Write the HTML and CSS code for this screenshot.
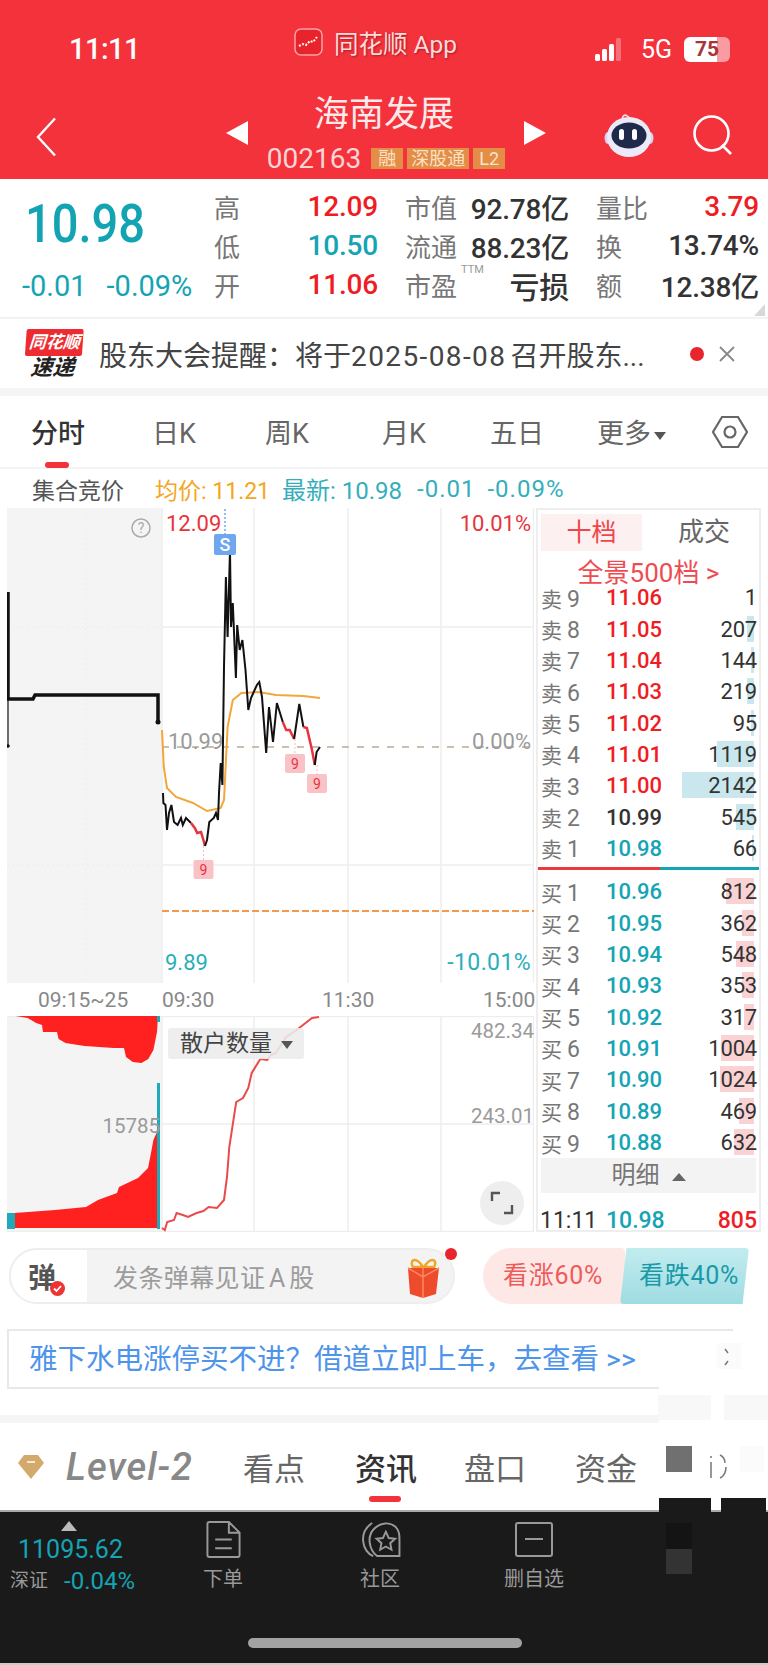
FILE: index.html
```html
<!DOCTYPE html>
<html lang="zh-CN">
<head>
    <meta charset="UTF-8">
    <meta name="viewport" content="width=device-width, initial-scale=1.0">
    <title>海南发展 002163</title>
    <link rel="stylesheet" href="styles.css">
</head>
<body>
<div class="page">

    <!-- Red header -->
    <header class="topbar">
        <div class="status">
            <span class="clock">11:11</span>
            <div class="app-name">
                <svg class="app-logo" width="29" height="28" viewBox="0 0 29 28">
                    <rect x="1" y="1" width="27" height="26" rx="6" fill="#e8232c" stroke="#f9a3a6" stroke-width="1.5"/>
                    <path d="M5 18l4-2 3 1 4-4 3 1 4-5" fill="none" stroke="#fff" stroke-width="2" stroke-dasharray="2 1.5"/>
                </svg>
                <span>同花顺 App</span>
            </div>
            <div class="status-right">
                <svg width="27" height="23" viewBox="0 0 27 23">
                    <rect x="0" y="16" width="5" height="7" rx="1.5" fill="#fff"/>
                    <rect x="7" y="11" width="5" height="12" rx="1.5" fill="#fff"/>
                    <rect x="14" y="6" width="5" height="17" rx="1.5" fill="#fff"/>
                    <rect x="21" y="0" width="5" height="23" rx="1.5" fill="#fff" opacity=".3"/>
                </svg>
                <span class="net">5G</span>
                <div class="battery"><span>75</span></div>
            </div>
        </div>
        <div class="nav">
            <svg class="nav-back" width="21" height="40" viewBox="0 0 21 40">
                <path d="M19 1.5L2 20l17 18.5" fill="none" stroke="#fff" stroke-width="2.4"/>
            </svg>
            <div class="nav-center">
                <svg width="22" height="24" viewBox="0 0 22 24"><path d="M22 0v24L0 12z" fill="#fff"/></svg>
                <div class="stock-title">
                    <div class="stock-name">海南发展</div>
                    <div class="stock-code">
                        <span>002163</span>
                        <i class="tag">融</i><i class="tag">深股通</i><i class="tag">L2</i>
                    </div>
                </div>
                <svg width="22" height="24" viewBox="0 0 22 24"><path d="M0 0v24l22-12z" fill="#fff"/></svg>
            </div>
            <svg class="robot" width="50" height="44" viewBox="0 0 50 44">
                <path d="M19 8c-2-5 2-7 4-5l4 3" fill="none" stroke="#f4d9e4" stroke-width="1.6"/>
                <ellipse cx="4" cy="25" rx="3.5" ry="6" fill="#d9d4ee"/>
                <ellipse cx="46" cy="25" rx="3.5" ry="6" fill="#d9d4ee"/>
                <ellipse cx="25" cy="24" rx="22" ry="20" fill="#eceaf8"/>
                <ellipse cx="25" cy="22.500" rx="17.500" ry="13" fill="#1f2a4a"/>
                <rect x="15" y="16" width="5" height="11" rx="2.500" fill="#fff"/>
                <rect x="28" y="16" width="5" height="11" rx="2.500" fill="#fff"/>
            </svg>
            <svg class="search" width="40" height="40" viewBox="0 0 40 40">
                <circle cx="18.500" cy="18.500" r="17" fill="none" stroke="#fff" stroke-width="2.600"/>
                <path d="M29 30l9 9" stroke="#fff" stroke-width="2.600"/>
            </svg>
        </div>
    </header>

    <!-- Quote summary -->
    <section class="quote">
        <div class="quote-price">
            <div class="price-big">10.98</div>
            <div class="price-change"><span>-0.01</span><span>-0.09%</span></div>
        </div>
        <div class="stat-col first">
            <div class="stat"><label>高</label><b class="up">12.09</b></div>
            <div class="stat"><label>低</label><b class="down">10.50</b></div>
            <div class="stat"><label>开</label><b class="up">11.06</b></div>
        </div>
        <div class="stat-col">
            <div class="stat"><label>市值</label><b>92.78亿</b></div>
            <div class="stat"><label>流通</label><b>88.23亿</b></div>
            <div class="stat"><label class="ttm">市盈<sup>TTM</sup></label><b class="loss">亏损</b></div>
        </div>
        <div class="stat-col last">
            <div class="stat"><label>量比</label><b class="up">3.79</b></div>
            <div class="stat"><label>换</label><b>13.74%</b></div>
            <div class="stat"><label>额</label><b>12.38亿</b></div>
        </div>
        <svg class="corner" width="11" height="12" viewBox="0 0 11 12"><path d="M11 0v12H0z" fill="#d8d8d8"/></svg>
    </section>

    <!-- News notice -->
    <section class="notice">
        <div class="notice-logo">
            <div class="logo-top">同花顺</div>
            <div class="logo-bottom">速递</div>
        </div>
        <div class="notice-text">股东大会提醒&#xFF1A;将于<span class="notice-date">2025-08-08</span>召开股东...</div>
        <span class="notice-dot"></span>
        <svg width="16" height="16" viewBox="0 0 16 16"><path d="M1 1l14 14M15 1L1 15" stroke="#888" stroke-width="1.800"/></svg>
    </section>

    <!-- Chart period tabs -->
    <nav class="period-tabs">
        <span class="active">分时</span>
        <span>日K</span>
        <span>周K</span>
        <span>月K</span>
        <span>五日</span>
        <span>更多<em class="caret"></em></span>
        <svg width="36" height="36" viewBox="0 0 36 36">
            <path d="M10 3h16l9 15-9 15H10L1 18z" fill="none" stroke="#666" stroke-width="2.200"/>
            <circle cx="18" cy="18" r="5.500" fill="none" stroke="#666" stroke-width="2.200"/>
        </svg>
    </nav>

    <div class="chart-head">
        <span class="auction">集合竞价</span>
        <span class="avg">均价: 11.21</span>
        <span class="latest">最新: 10.98</span>
        <span class="latest pct">-0.01</span>
        <span class="latest pct">-0.09%</span>
    </div>

    <section class="market">
        <div class="charts">
            <svg class="main-chart" width="527" height="475" viewBox="7 508 527 475">
                <rect x="7" y="508" width="155" height="475" fill="#f4f4f4"/>
                <g class="grid">
                    <path d="M162 508V983M254 508V983M348 508V983M441 508V983M533.500 508V983M162 627H534M162 865H534"/>
                </g>
                <path d="M7 627H162M7 865H162M86 508V983" stroke="#ececec" stroke-dasharray="2 3"/>

                <!-- pre-market -->
                <path d="M8 592V699H33L35 695H158V722" fill="none" stroke="#111" stroke-width="3.500"/>
                <path d="M8 699V746" stroke="#111" stroke-width="1.200"/>
                <circle cx="158" cy="722" r="2.500" fill="#111"/>
                <circle cx="8" cy="746" r="1.800" fill="#111"/>

                <path d="M162 747H534" stroke="#cdbfae" stroke-width="2" stroke-dasharray="7 8"/>
                <path d="M162 911H534" stroke="#f49a4c" stroke-width="2.200" stroke-dasharray="7 3"/>

                <text class="t-gray" x="168" y="749">10.99</text>
                <text class="t-gray" x="531" y="749" text-anchor="end">0.00%</text>

                <!-- average -->
                <polyline class="avg-line" points="162,730 163.800,767 167,788 176,797 193,803 207,811 220.700,808 224,800 227.600,727 232.800,700 241.400,693 258.600,692 275.900,695 303.400,696 320,698"/>

                <!-- price -->
                <polyline class="price-line" points="163,793 163.400,803 165.500,805 167,830 169,813 171.400,805 174,822 177.600,825 181,818 182.800,825 186,818 191,823"/>
                <polyline class="price-line red" points="191,823 194.800,828 197.200,833 201,832 203.400,840 205,846"/>
                <polyline class="price-line" points="205,846 207,840 209.300,822 213.800,818 216,813 218,820 219,793 220.700,763 222.400,785 224,667 225.900,577 227.600,637 230,550 231,627 232.800,603 235.900,678 237.200,625 239.700,650 242.400,640 245.500,670 248.300,710 251,698 256.900,685 259.300,682 262,697 266.200,753 269,707 273,742 276.900,703 282.800,722"/>
                <polyline class="price-line red" points="282.800,722 286.200,730 289.700,730 294.100,739"/>
                <polyline class="price-line" points="294.100,739 299.300,704 303.400,727"/>
                <polyline class="price-line red" points="303.400,727 306.900,728 312,750 314.800,765"/>
                <polyline class="price-line" points="314.800,765 316.600,752 320,747"/>

                <!-- markers -->
                <path d="M225 509V534" stroke="#6fa8f0" stroke-width="1.500" stroke-dasharray="2 2"/>
                <rect x="214" y="534" width="22" height="21" rx="2" fill="#6ea6ef"/>
                <text class="t-mark white" x="225" y="551" text-anchor="middle">S</text>
                <path d="M203.500 846V860M295 739V754M317 765V774" stroke="#f7b9bf" stroke-dasharray="2 2"/>
                <rect x="193.500" y="860" width="20" height="19" rx="2" fill="#f9c2c7"/>
                <rect x="285" y="754" width="20" height="19" rx="2" fill="#f9c2c7"/>
                <rect x="307" y="774" width="20" height="19" rx="2" fill="#f9c2c7"/>
                <text class="t-nine" x="203.500" y="875" text-anchor="middle">9</text>
                <text class="t-nine" x="295" y="769" text-anchor="middle">9</text>
                <text class="t-nine" x="317" y="789" text-anchor="middle">9</text>

                <circle cx="141" cy="528" r="9" fill="none" stroke="#aaa" stroke-width="1.500"/>
                <text class="t-help" x="141" y="533" text-anchor="middle">?</text>

                <text class="t-up" x="166" y="531">12.09</text>
                <text class="t-up" x="531" y="531" text-anchor="end">10.01%</text>
                <text class="t-down" x="165" y="970">9.89</text>
                <text class="t-down wide" x="531" y="970" text-anchor="end">-10.01%</text>
            </svg>

            <div class="time-axis">
                <span>09:15~25</span><span>09:30</span><span>11:30</span><span>15:00</span>
            </div>

            <div class="sub-chart">
                <svg width="527" height="216" viewBox="7 1016 527 216">
                    <rect x="7" y="1016" width="155" height="216" fill="#f4f4f4"/>
                    <g class="grid">
                        <path d="M162 1016V1232M254 1016V1232M348 1016V1232M441 1016V1232M533.500 1016V1232M162 1124H534M7 1231.500H534M7 1016.500H534"/>
                    </g>
                    <polygon fill="#ff2020" points="15.500,1016 27.600,1018 36.200,1023 42,1025 43,1032 57,1032 58.600,1039 65.500,1043 84.500,1046 113.800,1048 124,1048 126,1057 132.800,1062 141.400,1063 148.300,1059 153.400,1050 157,1032 158,1016"/>
                    <polygon fill="#ff2020" points="14.500,1213 55,1210 86,1207 98,1200 117,1193 119,1187 138,1178 148,1168 151,1153 153.400,1140 157,1132 158,1228 14.500,1228"/>
                    <rect x="7" y="1213" width="8" height="16" fill="#20a9b8"/>
                    <rect x="157" y="1083" width="3" height="146" fill="#20a9b8"/>
                    <rect x="157" y="1016" width="3" height="6" fill="#20a9b8"/>
                    <polyline class="line-red" points="162,1228 164.800,1230 167.200,1222 174,1220 176.600,1213 182.800,1215 188,1217 196.600,1213 203.400,1211 208.600,1207 217,1208 224,1200 227,1177 229.300,1147 236.200,1102 243,1098 248.300,1088 251.700,1073 260.300,1059 267.200,1060 270.700,1055 275.900,1053 286.200,1037 296.600,1030 312,1018 319,1017"/>
                    <text class="t-gray small" x="160" y="1133" text-anchor="end">15785</text>
                    <text class="t-gray small" x="534" y="1038" text-anchor="end">482.34</text>
                    <text class="t-gray small" x="534" y="1123" text-anchor="end">243.01</text>
                </svg>
                <div class="indicator-chip">散户数量<em class="caret"></em></div>
                <div class="expand">
                    <svg width="24" height="24" viewBox="0 0 24 24"><path d="M2 10V2h8M22 14v8h-8" fill="none" stroke="#555" stroke-width="2.400"/></svg>
                </div>
            </div>
        </div>

        <!-- Order book -->
        <aside class="book">
            <div class="book-tabs"><span class="active">十档</span><span>成交</span></div>
            <div class="book-all">全景500档 &gt;</div>

            <div class="book-row"><label>卖<i>9</i></label><b class="up">11.06</b><span class="qty">1</span></div>
            <div class="book-row"><label>卖<i>8</i></label><b class="up">11.05</b><span class="qty"><u class="bar sell" style="width:7px"></u>207</span></div>
            <div class="book-row"><label>卖<i>7</i></label><b class="up">11.04</b><span class="qty"><u class="bar sell" style="width:3px"></u>144</span></div>
            <div class="book-row"><label>卖<i>6</i></label><b class="up">11.03</b><span class="qty"><u class="bar sell" style="width:7px"></u>219</span></div>
            <div class="book-row"><label>卖<i>5</i></label><b class="up">11.02</b><span class="qty"><u class="bar sell" style="width:3px"></u>95</span></div>
            <div class="book-row"><label>卖<i>4</i></label><b class="up">11.01</b><span class="qty"><u class="bar sell" style="width:37px"></u>1119</span></div>
            <div class="book-row"><label>卖<i>3</i></label><b class="up">11.00</b><span class="qty"><u class="bar sell" style="width:72px"></u>2142</span></div>
            <div class="book-row"><label>卖<i>2</i></label><b>10.99</b><span class="qty"><u class="bar sell" style="width:18px"></u>545</span></div>
            <div class="book-row"><label>卖<i>1</i></label><b class="down">10.98</b><span class="qty"><u class="bar sell" style="width:2px"></u>66</span></div>

            <div class="book-split"></div>

            <div class="book-row"><label>买<i>1</i></label><b class="down">10.96</b><span class="qty"><u class="bar buy" style="width:28px"></u>812</span></div>
            <div class="book-row"><label>买<i>2</i></label><b class="down">10.95</b><span class="qty"><u class="bar buy" style="width:12px"></u>362</span></div>
            <div class="book-row"><label>买<i>3</i></label><b class="down">10.94</b><span class="qty"><u class="bar buy" style="width:18px"></u>548</span></div>
            <div class="book-row"><label>买<i>4</i></label><b class="down">10.93</b><span class="qty"><u class="bar buy" style="width:12px"></u>353</span></div>
            <div class="book-row"><label>买<i>5</i></label><b class="down">10.92</b><span class="qty"><u class="bar buy" style="width:10px"></u>317</span></div>
            <div class="book-row"><label>买<i>6</i></label><b class="down">10.91</b><span class="qty"><u class="bar buy" style="width:33px"></u>1004</span></div>
            <div class="book-row"><label>买<i>7</i></label><b class="down">10.90</b><span class="qty"><u class="bar buy" style="width:34px"></u>1024</span></div>
            <div class="book-row"><label>买<i>8</i></label><b class="down">10.89</b><span class="qty"><u class="bar buy" style="width:15px"></u>469</span></div>
            <div class="book-row"><label>买<i>9</i></label><b class="down">10.88</b><span class="qty"><u class="bar buy" style="width:20px"></u>632</span></div>

            <div class="book-detail">明细<em class="caret-up"></em></div>
            <div class="book-trade"><span>11:11</span><b class="down">10.98</b><b class="up">805</b></div>
        </aside>
    </section>

    <!-- Danmaku + vote -->
    <section class="danmu-row">
        <div class="danmu">
            <div class="danmu-icon">弹<svg width="15" height="15" viewBox="0 0 15 15"><circle cx="7.500" cy="7.500" r="7.500" fill="#ee3333"/><path d="M4 7.500l2.500 2.500 4.500-5" fill="none" stroke="#fff" stroke-width="1.800"/></svg></div>
            <div class="danmu-input">发条弹幕见证 A 股</div>
            <svg class="gift" width="33" height="42" viewBox="0 0 33 42">
                <path d="M16 11c-8-12-14-6-10 0zM17 11c8-12 14-6 10 0z" fill="none" stroke="#f0a428" stroke-width="2.500"/>
                <path d="M1 12h31l-3 26-13 4-13-4z" fill="#ee4a2c"/>
                <path d="M16 12v30M1 12l15 9 16-9" fill="none" stroke="#f98a5c" stroke-width="1.500"/>
            </svg>
            <span class="danmu-dot"></span>
        </div>
        <div class="vote">
            <div class="vote-up">看涨60%</div>
            <div class="vote-down">看跌40%</div>
        </div>
    </section>

    <section class="banner">雅下水电涨停买不进&#xFF1F;借道立即上车&#xFF0C;去查看 &gt;&gt;</section>

    <!-- Bottom info tabs -->
    <nav class="info-tabs">
        <svg width="26" height="24" viewBox="0 0 26 24">
            <path d="M6 0h14l6 8-13 16L0 8z" fill="#d3a96c"/>
            <rect x="9" y="6" width="8" height="2" fill="#f6e8d2"/>
        </svg>
        <span class="level2">Level-2</span>
        <span>看点</span>
        <span class="active">资讯</span>
        <span>盘口</span>
        <span>资金</span>
    </nav>

    <footer class="bottom">
        <div class="index">
            <svg width="16" height="10" viewBox="0 0 16 10"><path d="M8 0l8 10H0z" fill="#bbb"/></svg>
            <div class="index-value">11095.62</div>
            <div class="index-line"><span>深证</span><b>-0.04%</b></div>
        </div>
        <div class="bottom-item">
            <svg width="35" height="38" viewBox="0 0 35 38">
                <path d="M3 1h20l11 11v23a2 2 0 0 1-2 2H3a2 2 0 0 1-2-2V3a2 2 0 0 1 2-2zM23 1v11h11M9 19h17M9 28h17" fill="none" stroke="#999" stroke-width="2"/>
            </svg>
            <span>下单</span>
        </div>
        <div class="bottom-item">
            <svg width="42" height="38" viewBox="0 0 42 38">
                <path d="M14 36C3 32-2 12 13 2M18 36C10 30 7 16 15 8c7-7 16-7 22-2 4 4 4 8 4 14v16z" fill="none" stroke="#999" stroke-width="2"/>
                <path d="M27 11l3 6.500 6.500.8-5 4.500 1.300 6.700-5.800-3.300-5.800 3.300 1.300-6.700-5-4.500 6.500-.8z" fill="none" stroke="#999" stroke-width="2"/>
            </svg>
            <span>社区</span>
        </div>
        <div class="bottom-item">
            <svg width="38" height="35" viewBox="0 0 38 35">
                <rect x="1" y="1" width="36" height="33" rx="2" fill="none" stroke="#999" stroke-width="2"/>
                <path d="M10 17h18" stroke="#999" stroke-width="2"/>
            </svg>
            <span>删自选</span>
        </div>
        <div class="home-bar"></div>
    </footer>

    <!-- masked part of the screenshot, right side -->
    <div class="mask mask-white"></div>
    <div class="mask mask-strip-a"></div>
    <div class="mask mask-strip-b"></div>
    <div class="mask mask-faint-a"></div>
    <div class="mask mask-faint-b"></div>
    <div class="mask mask-gray"></div>
    <div class="mask mask-dark-a"></div>
    <div class="mask mask-dark-b"></div>
    <div class="mask mask-black-a"></div>
    <div class="mask mask-black-b"></div>
    <svg class="mask mask-bits" width="24" height="28" viewBox="0 0 24 28">
        <path d="M3 3v2M3 9v16M12 2c4 2 5 4 5 8M18 14c0 5-2 9-6 11" fill="none" stroke="#777" stroke-width="1.500"/>
    </svg>
    <svg class="mask mask-bits-b" width="10" height="20" viewBox="0 0 10 20">
        <path d="M3 1l3 4M6 13l-3 4" fill="none" stroke="#777" stroke-width="1.500"/>
    </svg>
</div>
</body>
</html>
```

FILE: styles.css
```css
/* Basic styling */
* {
    box-sizing: border-box;
}

body {
    margin: 0;
    background: #fff;
    font-family: Roboto, "Noto Sans CJK SC", sans-serif;
    color: #333;
}

.page {
    position: relative;
    width: 768px;
    height: 1665px;
    overflow: hidden;
}

.up { color: #f01c24; }
.down { color: #14a4b4; }

em, i, u { font-style: normal; text-decoration: none; }

.caret {
    display: inline-block;
    margin-left: 3px;
    vertical-align: middle;
    border-left: 6px solid transparent;
    border-right: 6px solid transparent;
    border-top: 8px solid #555;
}

.caret-up {
    display: inline-block;
    margin-left: 12px;
    vertical-align: middle;
    border-left: 7px solid transparent;
    border-right: 7px solid transparent;
    border-bottom: 8px solid #666;
}

/* Header */
.topbar {
    height: 179px;
    background: #f3323c;
    color: #fff;
}

.status {
    height: 90px;
    display: flex;
    align-items: center;
    padding: 0 38px 0 69px;
}

.clock {
    width: 225px;
    font-size: 29px;
    font-weight: 500;
    margin-top: 7px;
    letter-spacing: -0.5px;
}

.app-name {
    display: flex;
    align-items: center;
    gap: 11px;
    font-size: 24.500px;
    color: #fbdcdc;
    text-shadow: 1px 1px 2px rgba(120, 0, 0, 0.5);
    margin-top: -6px;
}

.app-logo {
    flex: none;
}

.status-right {
    margin-left: auto;
    display: flex;
    align-items: center;
    gap: 11px;
    margin-top: 8px;
}

.net {
    font-size: 25px;
    margin-left: 8px;
}

.battery {
    width: 46px;
    height: 25px;
    margin-left: 1px;
    border-radius: 6px;
    background: linear-gradient(90deg, #fff 72%, #f99ba0 72%);
    color: #a8343a;
    font-size: 21px;
    font-weight: 700;
    line-height: 25px;
    text-align: center;
}

.nav {
    height: 89px;
    display: flex;
    align-items: flex-start;
}

.nav-back {
    margin: 27px 0 0 36px;
}

.nav-center {
    display: flex;
    align-items: center;
    margin: 0 0 0 169px;
    width: 320px;
    justify-content: space-between;
    height: 80px;
    padding-top: 6px;
}

.stock-title {
    height: 74px;
    text-align: center;
}

.stock-name {
    font-size: 35px;
    line-height: 38px;
    margin-bottom: 9px;
    margin-left: -4px;
    color: #fde9e9;
}

.stock-code {
    display: flex;
    align-items: center;
    gap: 4px;
    font-size: 28px;
    height: 30px;
    color: #fbd5d5;
}

.stock-code span {
    margin-right: 6px;
}

.tag {
    min-width: 32px;
    padding: 0 4px;
    height: 21px;
    line-height: 21px;
    background: #e38d47;
    color: #fbe2c6;
    font-size: 18px;
    text-align: center;
    white-space: nowrap;
}

.robot {
    margin: 23px 0 0 58px;
}

.search {
    margin: 25px 0 0 39px;
}

/* Quote */
.quote {
    position: relative;
    height: 138px;
    display: flex;
    padding-top: 8px;
}

.quote-price {
    width: 214px;
    padding: 11px 0 0 25px;
}

.price-big {
    font-size: 47px;
    line-height: 52px;
    font-weight: 500;
    color: #13a4b4;
    transform: scaleY(1.14);
}

.price-change {
    margin-top: 21px;
    margin-left: -3px;
    display: flex;
    gap: 20px;
    font-size: 29px;
    line-height: 30px;
    color: #14a4b4;
    white-space: nowrap;
}

.stat-col {
    width: 164px;
    margin-left: 27px;
}

.stat-col.first {
    margin-left: 0;
}

.stat-col.last {
    width: 163px;
}

.stat {
    height: 39px;
    display: flex;
    justify-content: space-between;
    align-items: center;
}

.stat label {
    font-size: 26px;
    color: #777;
}

.stat b {
    font-size: 28px;
    font-weight: 500;
    letter-spacing: -0.2px;
}

.stat .loss {
    font-size: 30px;
    color: #333;
}

.ttm {
    position: relative;
}

.ttm sup {
    position: absolute;
    left: 56px;
    top: -3px;
    font-size: 11px;
    color: #999;
}

.corner {
    position: absolute;
    right: 3px;
    bottom: 1px;
}

/* Notice */
.notice {
    height: 79px;
    display: flex;
    align-items: center;
    border-top: 2px solid #f2f2f2;
    border-bottom: 8px solid #f5f5f5;
    padding: 0 28px 0 25px;
}

.notice-logo {
    width: 57px;
    text-align: center;
    transform: skewX(-4deg);
}

.logo-top {
    height: 27px;
    line-height: 26px;
    background: #ee2b30;
    border-radius: 2px;
    color: #fff;
    font-size: 17px;
    font-weight: 700;
    font-style: italic;
}

.logo-bottom {
    height: 23px;
    line-height: 24px;
    color: #222;
    font-size: 22px;
    font-weight: 700;
    font-style: italic;
}

.notice-text {
    margin-left: 17px;
    width: 591px;
    font-size: 28px;
    color: #444;
    white-space: nowrap;
}

.notice-date {
    margin: 0 4px 0 0;
    letter-spacing: 1.400px;
}

.notice-dot {
    width: 14px;
    height: 14px;
    border-radius: 50%;
    background: #e8252c;
    margin-right: 15px;
}

/* Period tabs */
.period-tabs {
    height: 71px;
    display: grid;
    grid-template-columns: 121px 113px 117px 108px 107px 115px 36px;
    align-items: center;
    padding-left: 31px;
    font-size: 27px;
    color: #666;
}

.period-tabs span {
    position: relative;
    white-space: nowrap;
}

.period-tabs .active {
    color: #333;
    font-weight: 500;
}

.period-tabs .active::after {
    content: "";
    position: absolute;
    left: 14px;
    top: 50px;
    width: 24px;
    height: 6px;
    border-radius: 3px;
    background: #f3323c;
}

.chart-head {
    height: 41px;
    display: flex;
    align-items: center;
    border-top: 2px solid #f4f4f4;
    padding-left: 32px;
    font-size: 23px;
    white-space: nowrap;
}

.auction {
    color: #555;
    width: 123px;
}

.avg {
    color: #f5a623;
    width: 127px;
}

.latest {
    font-size: 24px;
    color: #35aebb;
    margin-right: 15px;
}

.latest.pct {
    letter-spacing: 1px;
    margin-right: 12px;
}

/* Market area */
.market {
    display: flex;
    gap: 2px;
    height: 724px;
    padding-left: 7px;
}

.charts {
    width: 527px;
}

.charts svg {
    display: block;
}

.grid path {
    fill: none;
    stroke: #eeeeee;
    stroke-width: 1.500;
}

.avg-line {
    fill: none;
    stroke: #f3a63a;
    stroke-width: 2;
}

.price-line {
    fill: none;
    stroke: #111;
    stroke-width: 2;
}

.price-line.red {
    stroke: #e8333c;
    stroke-width: 2.500;
}

.line-red {
    fill: none;
    stroke: #ea4a4a;
    stroke-width: 2;
}

.t-gray { font-size: 22px; fill: #9a9a9a; }
.t-gray.small { font-size: 20.500px; }
.t-up { font-size: 22px; fill: #e8333c; }
.t-down { font-size: 22px; fill: #2aaebb; }
.t-down.wide { font-size: 23px; letter-spacing: 0.400px; }
.t-mark { font-size: 18px; font-weight: 500; }
.t-mark.white { fill: #fff; }
.t-nine { font-size: 14px; fill: #e8333c; }
.t-help { font-size: 14px; fill: #aaa; }

.time-axis {
    height: 33px;
    position: relative;
    display: grid;
    grid-template-columns: 155px 160px 161px 51px;
    align-items: center;
    font-size: 21px;
    color: #888;
    white-space: nowrap;
}

.time-axis span:first-child {
    padding-left: 31px;
}

.sub-chart {
    position: relative;
    height: 216px;
}

.indicator-chip {
    position: absolute;
    left: 161px;
    top: 12px;
    width: 136px;
    height: 31px;
    padding-left: 12px;
    line-height: 31px;
    font-size: 23px;
    color: #444;
    background: rgba(236, 236, 236, 0.88);
    border-radius: 3px;
}

.indicator-chip .caret {
    margin-left: 9px;
}

.expand {
    position: absolute;
    left: 473px;
    top: 165px;
    width: 44px;
    height: 44px;
    border-radius: 50%;
    background: #eeeeee;
    display: flex;
    align-items: center;
    justify-content: center;
}

/* Order book */
.book {
    width: 225px;
    height: 724px;
    border: 2px solid #eee;
}

.book-tabs {
    display: grid;
    grid-template-columns: 101px 1fr;
    margin: 4px 5px 0 3px;
    height: 37px;
    line-height: 37px;
    font-size: 25px;
    text-align: center;
    color: #666;
}

.book-tabs span:last-child {
    padding-left: 12px;
    font-size: 26px;
}

.book-tabs .active {
    background: #fdf0f0;
    color: #f0454b;
}

.book-all {
    height: 31px;
    line-height: 45px;
    text-align: center;
    font-size: 26px;
    color: #ef4c52;
    white-space: nowrap;
}

.book-row {
    position: relative;
    height: 31.350px;
    display: grid;
    grid-template-columns: 65px 1fr auto;
    align-items: center;
    padding: 0 2px 0 3px;
    font-size: 22px;
}

.book-row label {
    font-size: 21px;
    color: #777;
}

.book-row label i {
    margin-left: 5px;
    font-size: 23px;
}

.book-row b {
    font-weight: 500;
}

.book-row .qty {
    position: relative;
    z-index: 0;
    color: #333;
    letter-spacing: -0.2px;
}

.bar {
    position: absolute;
    z-index: -1;
    right: 3px;
    top: -1px;
    height: 26px;
}

.bar.sell { background: #c9e7ec; }
.bar.buy { background: #fad2d4; }

.book-split {
    height: 3px;
    margin: 3px 0 6px;
    background: linear-gradient(90deg, #ea3a40 55%, #14a4b4 55%);
}

.book-detail {
    margin: 0 3px 0 3px;
    height: 35px;
    line-height: 35px;
    background: #f3f3f3;
    text-align: center;
    font-size: 24px;
    color: #777;
}

.book-trade {
    display: grid;
    grid-template-columns: 66px 1fr auto;
    padding: 13px 2px 0 2px;
    font-size: 23px;
    line-height: 30px;
    color: #333;
}

.book-trade b {
    font-weight: 500;
}

/* Danmaku */
.danmu-row {
    display: flex;
    height: 97px;
    padding: 16px 0 0 9px;
}

.danmu {
    position: relative;
    width: 446px;
    height: 56px;
    display: flex;
    align-items: center;
    border: 2px solid #eeeeee;
    border-radius: 28px;
    background: linear-gradient(90deg, #fff 76px, #f3f3f3 76px);
}

.danmu-icon {
    position: relative;
    width: 76px;
    padding-left: 17px;
    font-size: 28px;
    font-weight: 700;
    color: #555;
}

.danmu-icon svg {
    position: absolute;
    left: 39px;
    top: 25px;
}

.danmu-input {
    margin-left: 26px;
    font-size: 25px;
    letter-spacing: 0.400px;
    color: #9c9c9c;
    word-spacing: -3px;
}

.gift {
    position: absolute;
    left: 396px;
    top: 6px;
}

.danmu-dot {
    position: absolute;
    right: -4px;
    top: -2px;
    width: 12px;
    height: 12px;
    border-radius: 50%;
    background: #e8252c;
}

.vote {
    display: flex;
    margin-left: 28px;
    height: 56px;
}

.vote-up {
    width: 142px;
    padding-left: 20px;
    line-height: 56px;
    font-size: 25px;
    letter-spacing: 0.700px;
    color: #ef5b5b;
    background: #fde8e6;
    border-radius: 28px 4px 4px 28px;
    white-space: nowrap;
}

.vote-down {
    width: 129px;
    margin-left: -5px;
    padding-left: 19px;
    line-height: 56px;
    font-size: 25px;
    letter-spacing: 0.700px;
    color: #1a9aa8;
    background: linear-gradient(180deg, #c2ecef, #9fdce2);
    border-radius: 4px;
    clip-path: polygon(5% 0, 100% 0, 95% 100%, 0 100%);
    white-space: nowrap;
}

/* Blue banner */
.banner {
    width: 726px;
    height: 60px;
    margin-left: 7px;
    padding-left: 20px;
    line-height: 58px;
    font-size: 28.500px;
    color: #4e94ea;
    border: 2px solid #e8e8e8;
    border-right: 0;
    white-space: nowrap;
}

/* Info tabs */
.info-tabs {
    margin-top: 26px;
    height: 95px;
    border-top: 8px solid #f5f5f5;
    display: grid;
    grid-template-columns: 48px 177px 112px 109px 111px 70px;
    align-items: center;
    padding-left: 18px;
    font-size: 31px;
    color: #666;
}

.info-tabs span {
    position: relative;
    white-space: nowrap;
}

.info-tabs .level2 {
    font-size: 38px;
    font-weight: 500;
    font-style: italic;
    letter-spacing: 1px;
    color: #888;
}

.info-tabs .active {
    color: #333;
    font-weight: 500;
}

.info-tabs .active::after {
    content: "";
    position: absolute;
    left: 14px;
    top: 52px;
    width: 32px;
    height: 6px;
    border-radius: 3px;
    background: #f3323c;
}

/* Bottom bar */
.bottom {
    position: relative;
    height: 155px;
    background: #1a1a1a;
    border-top: 2px solid #aaa;
    border-bottom: 2px solid #ccc;
    display: grid;
    grid-template-columns: 150px 146px 168px 140px;
    align-content: start;
    color: #999;
}

.index {
    padding: 9px 0 0 10px;
    text-align: center;
}

.index svg {
    display: block;
    margin-left: 51px;
}

.index-value {
    font-size: 25px;
    line-height: 32px;
    margin-top: 3px;
    text-align: left;
    padding-left: 8px;
    color: #14a4b4;
}

.index-line {
    display: flex;
    align-items: center;
    gap: 16px;
    line-height: 30px;
    font-size: 19px;
    white-space: nowrap;
}

.index-line b {
    font-size: 24px;
    font-weight: 400;
    color: #14a4b4;
}

.bottom-item {
    display: flex;
    flex-direction: column;
    align-items: center;
    padding-top: 9px;
    height: 80px;
    font-size: 20px;
    white-space: nowrap;
}

.bottom-item svg {
    height: 38px;
}

.bottom-item span {
    margin-top: 5px;
}

.home-bar {
    position: absolute;
    left: 248px;
    top: 126px;
    width: 274px;
    height: 10px;
    border-radius: 5px;
    background: #a2a2a2;
}

/* Masked blocks over the right side of the page */
.mask {
    position: absolute;
}

.mask-white {
    left: 659px;
    top: 1378px;
    width: 109px;
    height: 45px;
    background: #fff;
}

.mask-strip-a {
    left: 658px;
    top: 1395px;
    width: 53px;
    height: 25px;
    background: #f8f8f8;
}

.mask-strip-b {
    left: 724px;
    top: 1395px;
    width: 44px;
    height: 25px;
    background: #f8f8f8;
}

.mask-faint-a {
    left: 717px;
    top: 1343px;
    width: 24px;
    height: 26px;
    background: #fbfbfb;
}

.mask-faint-b {
    left: 740px;
    top: 1446px;
    width: 24px;
    height: 26px;
    background: #fbfbfb;
}

.mask-gray {
    left: 666px;
    top: 1446px;
    width: 26px;
    height: 26px;
    background: #707070;
}

.mask-dark-a {
    left: 666px;
    top: 1523px;
    width: 26px;
    height: 26px;
    background: #141414;
}

.mask-dark-b {
    left: 666px;
    top: 1549px;
    width: 26px;
    height: 25px;
    background: #333;
}

.mask-black-a {
    left: 659px;
    top: 1498px;
    width: 52px;
    height: 14px;
    background: #1a1a1a;
}

.mask-black-b {
    left: 721px;
    top: 1498px;
    width: 45px;
    height: 14px;
    background: #1a1a1a;
}

.mask-bits {
    left: 708px;
    top: 1453px;
}

.mask-bits-b {
    left: 722px;
    top: 1348px;
}
```
